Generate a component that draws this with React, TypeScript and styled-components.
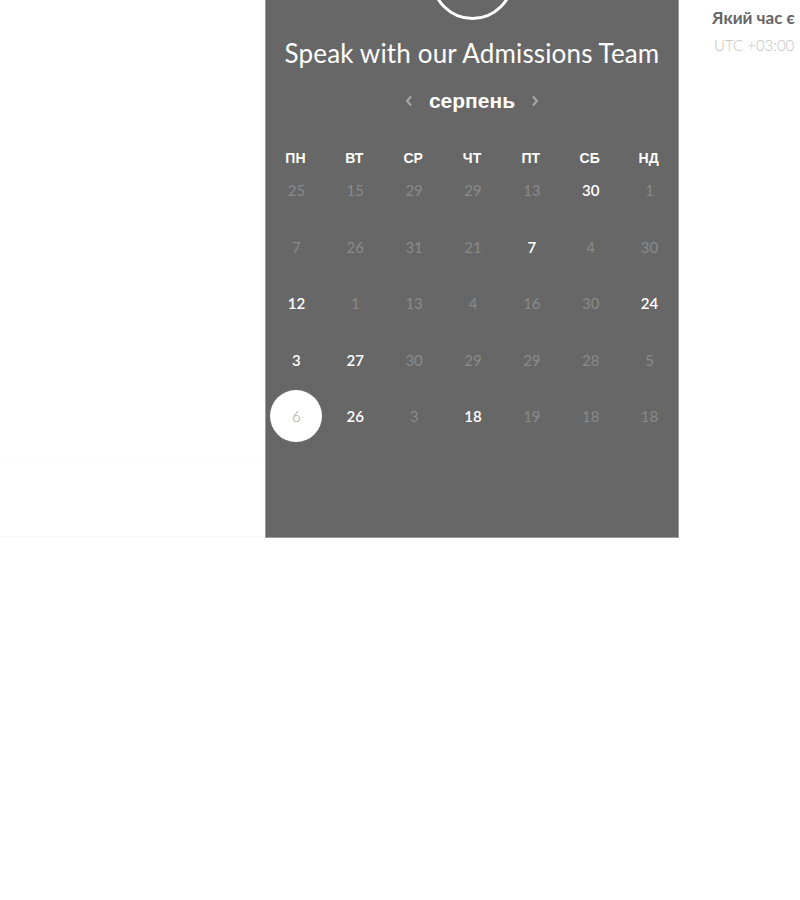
import styled, { createGlobalStyle } from 'styled-components';

const GlobalStyle = createGlobalStyle`
  html, body {
    margin: 0;
    padding: 0;
    background: #ffffff;
    overflow: hidden;
  }
`;

const Page = styled.div`
  display: flex;
  width: 800px;
  height: 900px;
  overflow: hidden;
  font-family: Lato, 'Open Sans', sans-serif;
`;

const LeftCol = styled.div`
  flex: 0 0 265px;
`;

const LeftBand = styled.div`
  height: 537px;
  box-sizing: border-box;
  border-bottom: 1px solid #f9f9f9;
  display: flex;
  flex-direction: column;
  justify-content: flex-end;
`;

const LeftStripe = styled.div`
  height: 74px;
  border-top: 1px solid #fbfbfb;
`;

const Panel = styled.div`
  flex: 0 0 414px;
  height: 538px;
  box-sizing: border-box;
  background: #676767;
  border-left: 1px solid #9c9c9c;
  border-right: 1px solid #9c9c9c;
  border-bottom: 1px solid #9c9c9c;
  display: flex;
  flex-direction: column;
  align-items: center;
  overflow: hidden;
`;

const Avatar = styled.div`
  width: 83px;
  height: 83px;
  box-sizing: border-box;
  border: 3px solid #ffffff;
  border-radius: 50%;
  margin-top: -63px;
  flex: 0 0 auto;
`;

const Title = styled.h1`
  margin: 18px 0 0;
  font-family: Lato, 'Open Sans', sans-serif;
  font-weight: 400;
  font-size: 26px;
  letter-spacing: 0.15px;
  line-height: 30px;
  color: #ffffff;
  white-space: nowrap;
`;

const MonthRow = styled.div`
  margin-top: 21px;
  height: 24px;
  display: flex;
  align-items: center;
  gap: 16px;
`;

const MonthName = styled.span`
  font-family: 'Liberation Sans', Arial, sans-serif;
  font-weight: 700;
  font-size: 21px;
  line-height: 24px;
  color: #ffffff;
`;

const ArrowButton = styled.span`
  display: flex;
  align-items: center;
  width: 8px;
  height: 24px;
`;

const WeekHeader = styled.div`
  margin-top: 33px;
  width: 100%;
  display: grid;
  grid-template-columns: repeat(7, 1fr);
  height: 24px;
  align-items: center;
`;

const WeekDay = styled.span`
  text-align: center;
  font-family: 'Liberation Sans', Arial, sans-serif;
  font-weight: 700;
  font-size: 14px;
  color: #ffffff;
`;

const DaysGrid = styled.div`
  width: 100%;
  display: grid;
  grid-template-columns: repeat(7, 1fr);
  grid-auto-rows: 40px;
  row-gap: 16.5px;
`;

const DayCell = styled.div`
  display: flex;
  align-items: center;
  justify-content: center;
  padding-left: 2px;
`;

const DayNumber = styled.span<{ $active?: boolean; $selected?: boolean }>`
  display: flex;
  align-items: center;
  justify-content: center;
  flex: 0 0 auto;
  width: 52px;
  height: 52px;
  border-radius: 50%;
  font-size: 15px;
  font-weight: ${(p) => (p.$selected ? 300 : p.$active ? 600 : 400)};
  color: ${(p) => (p.$selected ? '#9a9a9a' : p.$active ? '#ffffff' : '#8a8a8a')};
  background: ${(p) => (p.$selected ? '#ffffff' : 'transparent')};
`;

const Side = styled.div`
  flex: 1 1 auto;
  padding: 7px 0 0 33px;
  white-space: nowrap;
`;

const SideTitle = styled.div`
  font-family: Lato, sans-serif;
  font-weight: 700;
  font-size: 17px;
  line-height: 22px;
  color: #666666;
`;

const SideZone = styled.div`
  margin-top: 6px;
  font-family: Lato, sans-serif;
  font-weight: 300;
  font-size: 15px;
  line-height: 20px;
  color: #c2c2c2;
  padding-left: 2px;
`;

const weekDays = ['ПН', 'ВТ', 'СР', 'ЧТ', 'ПТ', 'СБ', 'НД'];

type Day = { n: number; active?: boolean; selected?: boolean };

const days: Day[] = [
  { n: 25 }, { n: 15 }, { n: 29 }, { n: 29 }, { n: 13 }, { n: 30, active: true }, { n: 1 },
  { n: 7 }, { n: 26 }, { n: 31 }, { n: 21 }, { n: 7, active: true }, { n: 4 }, { n: 30 },
  { n: 12, active: true }, { n: 1 }, { n: 13 }, { n: 4 }, { n: 16 }, { n: 30 }, { n: 24, active: true },
  { n: 3, active: true }, { n: 27, active: true }, { n: 30 }, { n: 29 }, { n: 29 }, { n: 28 }, { n: 5 },
  { n: 6, selected: true }, { n: 26, active: true }, { n: 3 }, { n: 18, active: true }, { n: 19 }, { n: 18 }, { n: 18 },
];

const Chevron = ({ dir }: { dir: 'left' | 'right' }) => (
  <svg width="8" height="12" viewBox="0 0 8 12">
    <path
      d={dir === 'left' ? 'M6 1.5 L2 6 L6 10.5' : 'M2 1.5 L6 6 L2 10.5'}
      fill="none"
      stroke="#a9a9a9"
      strokeWidth="2"
    />
  </svg>
);

export default function App() {
  return (
    <>
      <GlobalStyle />
      <Page>
        <LeftCol>
          <LeftBand>
            <LeftStripe />
          </LeftBand>
        </LeftCol>
        <Panel>
          <Avatar />
          <Title>Speak with our Admissions Team</Title>
          <MonthRow>
            <ArrowButton>
              <Chevron dir="left" />
            </ArrowButton>
            <MonthName>серпень</MonthName>
            <ArrowButton>
              <Chevron dir="right" />
            </ArrowButton>
          </MonthRow>
          <WeekHeader>
            {weekDays.map((d) => (
              <WeekDay key={d}>{d}</WeekDay>
            ))}
          </WeekHeader>
          <DaysGrid>
            {days.map((d, i) => (
              <DayCell key={i}>
                <DayNumber $active={d.active} $selected={d.selected}>
                  {d.n}
                </DayNumber>
              </DayCell>
            ))}
          </DaysGrid>
        </Panel>
        <Side>
          <SideTitle>Який час є</SideTitle>
          <SideZone>UTC +03:00</SideZone>
        </Side>
      </Page>
    </>
  );
}
